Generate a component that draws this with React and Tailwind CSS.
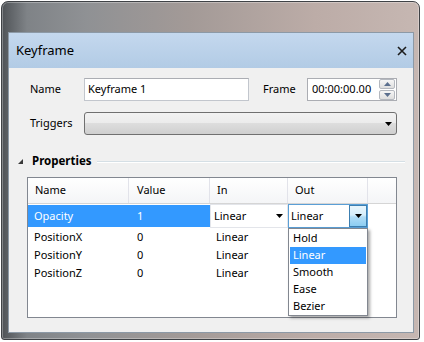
import React from "react";

const rows = [
  { name: "Opacity", value: "1", inMode: "Linear", selected: true },
  { name: "PositionX", value: "0", inMode: "Linear" },
  { name: "PositionY", value: "0", inMode: "Linear" },
  { name: "PositionZ", value: "0", inMode: "Linear" },
];

const options = ["Hold", "Linear", "Smooth", "Ease", "Bezier"];

const Arrow = () => (
  <svg width="7" height="4" viewBox="0 0 7 4">
    <path d="M0 0h7L3.5 4z" fill="#000" />
  </svg>
);

const SpinButton = ({ up }) => (
  <div className="flex h-[10px] w-[16px] items-center justify-center rounded-[2px] border border-[#b4b8bf] bg-[linear-gradient(#f6f6f6,#dedede)]">
    <svg width="7" height="4" viewBox="0 0 7 4">
      <path d={up ? "M0 4h7L3.5 0z" : "M0 0h7L3.5 4z"} fill="#5b6f8e" />
    </svg>
  </div>
);

const App = () => {
  return (
    <div className="h-[342px] w-[424px] bg-white font-['Noto_Sans',sans-serif] text-[11px] text-black">
      <div className="ml-px mt-px h-[339px] w-[419px] rounded-t-[7px] rounded-b-[3px] border border-[#3f4246] bg-[linear-gradient(90deg,#4f5357_0%,#7f8387_6%,#8f9194_20%,#a39a97_45%,#bcaca7_75%,#c6b7b2_100%)] pb-[6px] pl-[6px] pr-[5px] pt-[30px] shadow-[inset_0_0_0_1px_rgba(255,255,255,0.3)]">
        <div className="flex h-full flex-col border border-[#8c99a6] bg-[#f0f0f0]">
          {/* title bar */}
          <div className="flex h-[35px] shrink-0 items-center justify-between bg-[linear-gradient(#c4d8ee,#b2cbe5)] pl-[7px] pr-[6px]">
            <span className="text-[13px]">Keyframe</span>
            <svg width="10" height="10" viewBox="0 0 10 10">
              <path d="M1 1l8 8M9 1l-8 8" stroke="#1c1c1c" strokeWidth="1.6" />
            </svg>
          </div>

          <div className="flex flex-col pl-[9px] pr-[16px]">
            {/* name row */}
            <div className="mt-[10px] flex h-[23px] items-center pl-[12px]">
              <span className="w-[54px]">Name</span>
              <div className="flex h-[23px] w-[165px] items-center border border-[#c2c6cd] border-t-[#abadb3] bg-white pl-[3px]">
                Keyframe 1
              </div>
              <span className="ml-[14px] w-[44px]">Frame</span>
              <div className="flex h-[23px] flex-1 items-center justify-between border border-[#abadb3] bg-white pl-[4px] pr-px">
                <span>00:00:00.00</span>
                <div className="flex flex-col gap-px">
                  <SpinButton up />
                  <SpinButton />
                </div>
              </div>
            </div>

            {/* triggers row */}
            <div className="mt-[11px] flex h-[23px] items-center pl-[12px]">
              <span className="w-[54px]">Triggers</span>
              <div className="flex h-[23px] flex-1 items-center justify-end rounded-[3px] border border-[#707070] bg-[linear-gradient(#f2f2f2_0%,#ebebeb_50%,#dddddd_50%,#cfcfcf_100%)] pr-[4px]">
                <Arrow />
              </div>
            </div>

            {/* properties header */}
            <div className="mt-[18px] flex h-[16px] items-center">
              <svg width="5" height="5" viewBox="0 0 5 5">
                <path d="M5 0v5H0z" fill="#3a3a3a" />
              </svg>
              <span className="ml-[9px] text-[11.5px] font-bold">Properties</span>
              <div className="ml-[5px] mr-[-8px] mt-[2px] h-[2px] flex-1 border-t border-b border-t-[#d5dfe5] border-b-white" />
            </div>

            {/* grid */}
            <div className="relative ml-[9px] mt-[8px] h-[141px] border border-[#828790] bg-white">
              <div className="flex h-[26px] border-b border-[#d5d5d5] bg-[linear-gradient(#ffffff,#f4f5f7)]">
                <div className="flex w-[101px] items-center border-r border-[#e2e3ea] pl-[7px]">Name</div>
                <div className="flex w-[81px] items-center border-r border-[#e2e3ea] pl-[8px]">Value</div>
                <div className="flex w-[78px] items-center border-r border-[#e2e3ea] pl-[7px]">In</div>
                <div className="flex w-[80px] items-center border-r border-[#e2e3ea] pl-[7px]">Out</div>
                <div className="flex-1" />
              </div>

              {rows.map((row) =>
                row.selected ? (
                  <div key={row.name} className="flex h-[24px]">
                    <div className="mt-px flex h-[22px] w-[182px] items-center bg-[#3399ff] text-white">
                      <span className="w-[101px] pl-[6px]">{row.name}</span>
                      <span className="pl-[8px]">{row.value}</span>
                    </div>
                    <div className="flex w-[78px] items-center justify-between border border-[#e3e5ea] bg-white pl-[3px] pr-[4px]">
                      <span>{row.inMode}</span>
                      <Arrow />
                    </div>
                    <div className="flex w-[80px] items-center border border-[#5a9fd6] bg-white">
                      <span className="flex-1 pl-[2px]">Linear</span>
                      <div className="flex h-full w-[18px] items-center justify-center border border-[#3c7fb1] bg-[linear-gradient(#e8f5fc_0%,#d6eefb_45%,#b0dcf6_55%,#8ccdf2_100%)]">
                        <Arrow />
                      </div>
                    </div>
                  </div>
                ) : (
                  <div key={row.name} className="flex h-[18px] items-center">
                    <span className="w-[101px] pl-[6px]">{row.name}</span>
                    <span className="w-[81px] pl-[8px]">{row.value}</span>
                    <span className="pl-[6px]">{row.inMode}</span>
                  </div>
                )
              )}

              {/* open dropdown */}
              <div className="absolute left-[260px] top-[50px] h-[88px] w-[80px] border border-[#828790] bg-white p-px shadow-[2px_2px_3px_rgba(0,0,0,0.35)]">
                {options.map((opt) => (
                  <div
                    key={opt}
                    className={`flex h-[17px] items-center pl-[3px] ${
                      opt === "Linear" ? "bg-[#3399ff] text-white" : ""
                    }`}
                  >
                    {opt}
                  </div>
                ))}
              </div>
            </div>
          </div>
        </div>
      </div>
    </div>
  );
};

export default App;
